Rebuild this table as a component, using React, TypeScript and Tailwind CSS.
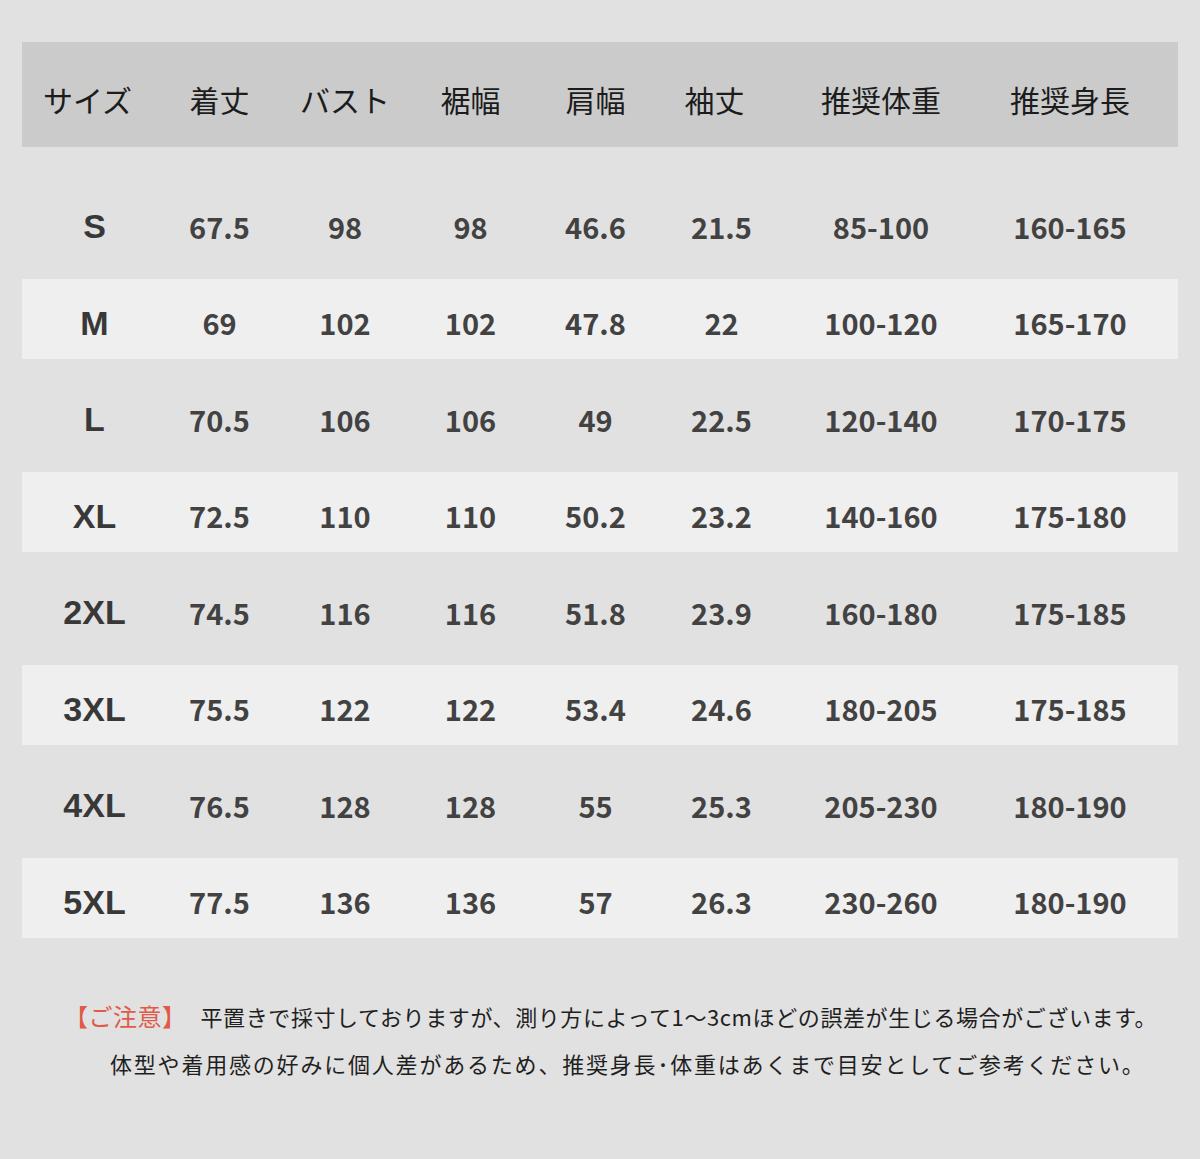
const headers = ["サイズ", "着丈", "バスト", "裾幅", "肩幅", "袖丈", "推奨体重", "推奨身長"];

const rows = [
  ["S", "67.5", "98", "98", "46.6", "21.5", "85-100", "160-165"],
  ["M", "69", "102", "102", "47.8", "22", "100-120", "165-170"],
  ["L", "70.5", "106", "106", "49", "22.5", "120-140", "170-175"],
  ["XL", "72.5", "110", "110", "50.2", "23.2", "140-160", "175-180"],
  ["2XL", "74.5", "116", "116", "51.8", "23.9", "160-180", "175-185"],
  ["3XL", "75.5", "122", "122", "53.4", "24.6", "180-205", "175-185"],
  ["4XL", "76.5", "128", "128", "55", "25.3", "205-230", "180-190"],
  ["5XL", "77.5", "136", "136", "57", "26.3", "230-260", "180-190"],
];

const cols = "grid grid-cols-[125px_125px_126px_125px_125px_127px_192px_186px] pl-[10px]";
const jp = "font-['Noto_Sans_CJK_JP',sans-serif]";

export default function App() {
  return (
    <div className={`min-h-[1159px] w-[1200px] bg-[#e1e1e1] pt-[42px] ${jp}`}>
      <div className="mx-[22px]">
        <div className={`${cols} h-[105px] items-center bg-[#cbcbcb] pt-[8px] text-[30px] text-[#1c1c1c]`}>
          {headers.map((h, i) => (
            <div
              key={h}
              className={`text-center leading-none ${i === 0 || i === 5 ? "-translate-x-[7px]" : ""}`}
            >
              {h}
            </div>
          ))}
        </div>

        <div className="mt-[35px] flex flex-col gap-[16.5px]">
          {rows.map((r, ri) => (
            <div
              key={r[0]}
              className={`${cols} h-[80px] items-center pt-[8px] ${ri % 2 === 1 ? "bg-[#efefef]" : ""}`}
            >
              {r.map((v, ci) => (
                <div
                  key={ci}
                  className={
                    ci === 0
                      ? "text-center font-['Liberation_Sans',sans-serif] text-[34px] leading-none font-bold text-[#383838]"
                      : "text-center text-[29px] leading-none font-semibold text-[#424242]"
                  }
                >
                  {v}
                </div>
              ))}
            </div>
          ))}
        </div>
      </div>

      <div className="mt-[66px] text-[22px] leading-none text-[#1f1f1f]">
        <p className="flex items-baseline pl-[64px]">
          <span className="text-[24px] tracking-[0.5px] text-[#e05a48]">【ご注意】</span>
          <span className="ml-[14px] tracking-[0.6px]">平置きで採寸しておりますが、測り方によって1～3cmほどの誤差が生じる場合がございます。</span>
        </p>
        <p className="mt-[24px] pl-[110px] tracking-[1.8px]">
          体型や着用感の好みに個人差があるため、推奨身長･体重はあくまで目安としてご参考ください。
        </p>
      </div>
    </div>
  );
}
